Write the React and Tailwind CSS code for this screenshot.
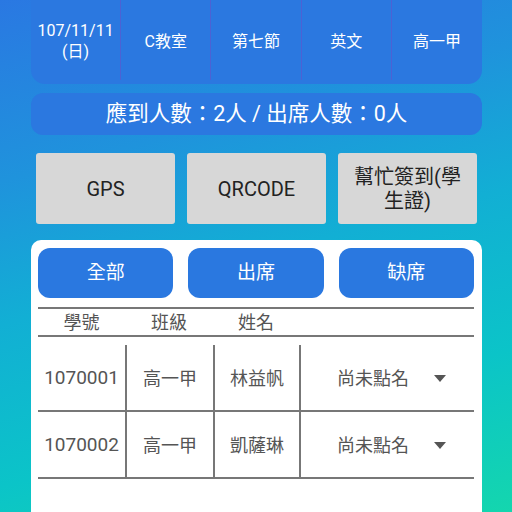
export default function App() {
  const font = { fontFamily: 'Roboto, "Noto Sans CJK TC", sans-serif' };
  const rows = [
    { id: "1070001", cls: "高一甲", name: "林益帆" },
    { id: "1070002", cls: "高一甲", name: "凱薩琳" },
  ];
  return (
    <div
      className="w-[512px] h-[512px] overflow-hidden bg-[linear-gradient(165deg,#2a78e2_0%,#1f93dc_28%,#12afd4_50%,#0bc4c8_75%,#14d6ae_100%)] pl-[31px] pr-[30px] flex flex-col"
      style={font}
    >
      {/* top info panel */}
      <div className="h-[84px] bg-[#2b78e0] rounded-b-[14px] grid grid-cols-5 text-white text-[16px]">
        <div className="flex flex-col items-center justify-center leading-[21px] pt-[2px] border-r border-[#4c62d4] mb-[4px]">
          <span>107/11/11</span>
          <span>(日)</span>
        </div>
        <div className="flex items-center justify-center pt-[4px] border-r border-[#4c62d4] mb-[4px]">C教室</div>
        <div className="flex items-center justify-center pt-[4px] border-r border-[#4c62d4] mb-[4px]">第七節</div>
        <div className="flex items-center justify-center pt-[4px] border-r border-[#4c62d4] mb-[4px]">英文</div>
        <div className="flex items-center justify-center pt-[4px] mb-[4px]">高一甲</div>
      </div>

      {/* counts */}
      <div className="mt-[9px] h-[42px] bg-[#2b78e0] rounded-[12px] flex items-center justify-center text-white text-[21.5px]">
        應到人數：2人 / 出席人數：0人
      </div>

      {/* action buttons */}
      <div className="mt-[18px] px-[5px] grid grid-cols-3 gap-[12px]">
        <div className="h-[71px] bg-[#d7d7d7] rounded-[3px] flex items-center justify-center text-[20px] text-[#222]">GPS</div>
        <div className="h-[71px] bg-[#d7d7d7] rounded-[3px] flex items-center justify-center text-[20px] text-[#222]">QRCODE</div>
        <div className="h-[71px] bg-[#d7d7d7] rounded-[3px] flex items-center justify-center text-[20px] leading-[24px] text-[#222] text-center px-[10px]">
          幫忙簽到(學生證)
        </div>
      </div>

      {/* card */}
      <div className="mt-[16px] flex-1 bg-white rounded-t-[10px] px-[7px] pt-[8px]">
        <div className="grid grid-cols-3 gap-[15px] pr-[1px]">
          {["全部", "出席", "缺席"].map((t) => (
            <div key={t} className="h-[50px] bg-[#2a78e0] rounded-[12px] flex items-center justify-center text-white text-[19px]">
              {t}
            </div>
          ))}
        </div>

        <div className="mt-[9px] mr-[1px] text-[#555]">
          <div className="h-[30px] border-t-2 border-b-2 border-[#777] flex items-center text-[18px]">
            <div className="w-[87px] text-center">學號</div>
            <div className="w-[88px] text-center">班級</div>
            <div className="w-[86px] text-center">姓名</div>
          </div>
          <div className="h-[8px]" />
          {rows.map((r) => (
            <div key={r.id} className="h-[67px] border-b-2 border-[#777] flex">
              <div className="w-[87px] flex items-center justify-center text-[19px] pt-[2px]">{r.id}</div>
              <div className="w-[88px] flex items-center justify-center text-[18px] pt-[2px] border-l-2 border-[#777]">{r.cls}</div>
              <div className="w-[86px] flex items-center justify-center text-[18px] pt-[2px] border-l-2 border-[#777]">{r.name}</div>
              <div className="flex-1 flex items-center border-l-2 border-[#777] text-[18px] pt-[2px]">
                <span className="ml-[36px]">尚未點名</span>
                <svg className="ml-[25px]" width="12" height="7" viewBox="0 0 12 7">
                  <polygon points="0,0 12,0 6,7" fill="#555" />
                </svg>
              </div>
            </div>
          ))}
        </div>
      </div>
    </div>
  );
}
